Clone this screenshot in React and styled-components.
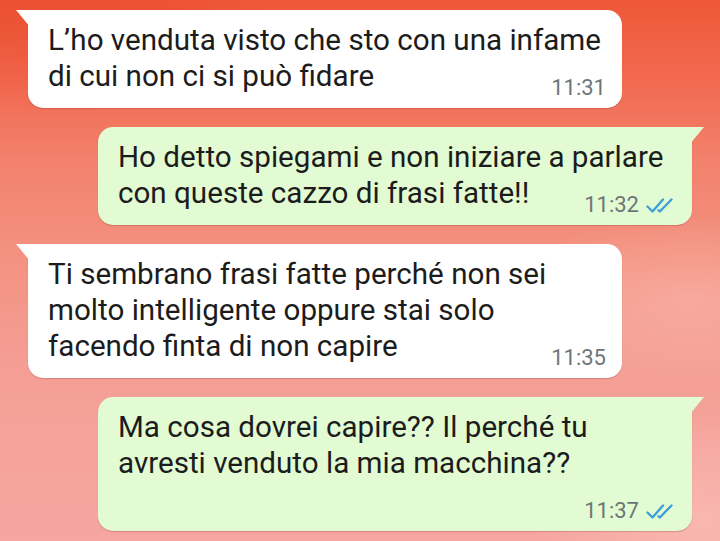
import React from "react";
import styled, { createGlobalStyle } from "styled-components";

const GlobalStyle = createGlobalStyle`
  html, body {
    margin: 0;
    padding: 0;
  }
  body {
    font-family: Roboto, "Noto Sans", "Liberation Sans", sans-serif;
  }
`;

const Screen = styled.div`
  width: 720px;
  height: 541px;
  overflow: hidden;
  box-sizing: border-box;
  padding-top: 10px;
  display: flex;
  flex-direction: column;
  gap: 19px;
  background:
    radial-gradient(ellipse 260px 120px at 690px 300px, rgba(255, 205, 195, 0.35), transparent 70%),
    radial-gradient(ellipse 300px 140px at 60px 20px, rgba(225, 60, 30, 0.35), transparent 70%),
    radial-gradient(ellipse 240px 160px at 700px 520px, rgba(255, 215, 210, 0.35), transparent 70%),
    linear-gradient(180deg, #ef5738 0%, #f2694f 14%, #f2816d 30%, #f3917f 46%, #f49c92 64%, #f5a39b 82%, #f6a69f 100%);
`;

const Bubble = styled.div`
  position: relative;
  box-sizing: border-box;
  width: 594px;
  display: flow-root;
  padding: 12px 21px 8px 20px;
  align-self: ${(p) => (p.$out ? "flex-end" : "flex-start")};
  margin: ${(p) => (p.$out ? "0 28px 0 0" : "0 0 0 28px")};
  background: ${(p) => (p.$out ? "#e2fbd2" : "#ffffff")};
  border-radius: ${(p) => (p.$out ? "15px 0 15px 15px" : "0 15px 15px 15px")};
  box-shadow: 0 1px 1px rgba(120, 40, 30, 0.25);
  color: #1c1c1c;
  font-size: 29.6px;
  line-height: 36px;

  &::before {
    content: "";
    position: absolute;
    top: 0;
    width: 14px;
    height: 17px;
    background: inherit;
    ${(p) =>
      p.$out
        ? "right: -12px; clip-path: polygon(0 0, 100% 0, 0 100%);"
        : "left: -12px; clip-path: polygon(0 0, 100% 0, 100% 100%);"}
  }
`;

const Meta = styled.span`
  float: right;
  display: flex;
  align-items: center;
  gap: 7px;
  margin: 18px -5px 0 26px;
  font-size: 22px;
  line-height: 24px;
  color: #6c7679;
`;

const Ticks = () => (
  <svg width="30" height="15" viewBox="0 0 30 15" fill="none">
    <path
      d="M1.5 8.5 L6.5 13.5 L17 1.5"
      stroke="#3a9fd8"
      strokeWidth="2.3"
      strokeLinecap="round"
      strokeLinejoin="round"
    />
    <path
      d="M12.5 12.2 L13.8 13.5 L25.5 1.5"
      stroke="#3a9fd8"
      strokeWidth="2.3"
      strokeLinecap="round"
      strokeLinejoin="round"
    />
  </svg>
);

const messages = [
  { out: false, time: "11:31", text: "L’ho venduta visto che sto con una infame di cui non ci si può fidare" },
  { out: true, time: "11:32", text: "Ho detto spiegami e non iniziare a parlare con queste cazzo di frasi fatte!!" },
  {
    out: false,
    time: "11:35",
    text: "Ti sembrano frasi fatte perché non sei molto intelligente oppure stai solo facendo finta di non capire",
  },
  { out: true, time: "11:37", text: "Ma cosa dovrei capire?? Il perché tu avresti venduto la mia macchina??" },
];

export default function App() {
  return (
    <>
      <GlobalStyle />
      <Screen>
        {messages.map((m, i) => (
          <Bubble key={i} $out={m.out}>
            {m.text}
            <Meta>
              {m.time}
              {m.out && <Ticks />}
            </Meta>
          </Bubble>
        ))}
      </Screen>
    </>
  );
}
